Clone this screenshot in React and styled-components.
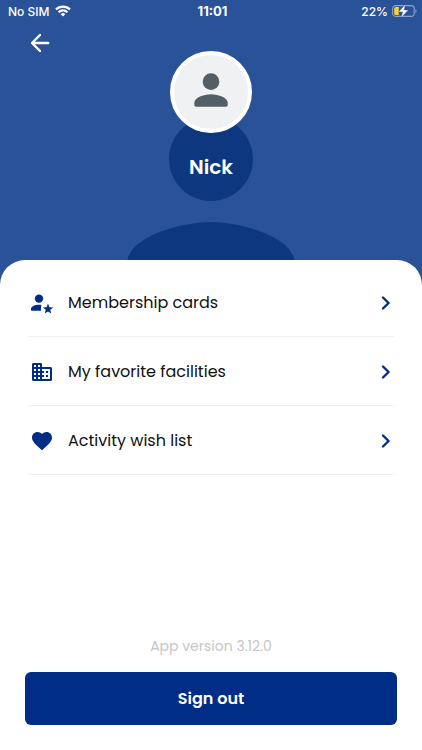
import React from 'react'
import styled, { createGlobalStyle } from 'styled-components'
import { MdPerson, MdFavorite } from 'react-icons/md'

const menuItems = [
  { label: 'Membership cards', icon: <MemberIcon /> },
  { label: 'My favorite facilities', icon: <BuildingIcon /> },
  { label: 'Activity wish list', icon: <MdFavorite size={24} /> },
]

function App() {
  return (
    <>
      <GlobalStyle />
      <Page>
        <Header>
          <Watermark>
            <MdPerson size={252} />
          </Watermark>
          <StatusBar>
            <Carrier>
              No SIM
              <WifiIcon />
            </Carrier>
            <Clock>11:01</Clock>
            <Battery>
              22%
              <BatteryIcon />
            </Battery>
          </StatusBar>
          <BackButton aria-label="Back">
            <svg width="20" height="20" viewBox="0 0 20 20" fill="none" stroke="currentColor" strokeWidth="2.4" strokeLinecap="round" strokeLinejoin="round">
              <path d="M18.2 10H2.2M10 2L2 10l8 8" />
            </svg>
          </BackButton>
          <Profile>
            <Avatar>
              <AvatarIcon />
            </Avatar>
            <Name>Nick</Name>
          </Profile>
        </Header>

        <Sheet>
          <Menu>
            {menuItems.map((item) => (
              <li key={item.label}>
                <MenuButton>
                  {item.icon}
                  <MenuLabel>{item.label}</MenuLabel>
                  <Chevron />
                </MenuButton>
              </li>
            ))}
          </Menu>
          <Footer>
            <Version>App version 3.12.0</Version>
            <SignOut>Sign out</SignOut>
          </Footer>
        </Sheet>
      </Page>
    </>
  )
}

function WifiIcon() {
  return (
    <svg width="16" height="12" viewBox="0 0 16 12" fill="none" stroke="currentColor" strokeWidth="2.2">
      <path d="M1 4.4a10 10 0 0 1 14 0" />
      <path d="M3.6 7.2a6.2 6.2 0 0 1 8.8 0" />
      <path d="M8 11.6L5.7 9.2a3.3 3.3 0 0 1 4.6 0z" fill="currentColor" stroke="none" />
    </svg>
  )
}

function BatteryIcon() {
  return (
    <svg width="25" height="14" viewBox="0 0 25 14">
      <rect x="0.6" y="1.6" width="21.6" height="10.8" rx="3.2" fill="none" stroke="#8ea2cc" strokeWidth="1.1" />
      <path d="M23.4 5.2v3.6c.8-.3 1.2-1 1.2-1.8s-.4-1.5-1.2-1.8z" fill="#8ea2cc" />
      <path d="M3.8 3h3v8h-3a1.6 1.6 0 0 1-1.6-1.6V4.6A1.6 1.6 0 0 1 3.8 3z" fill="#f8d038" />
      <path d="M13.4.2L6.6 8h4L9 13.8 16.400 6h-4.200z" fill="#fff" stroke="#2a5298" strokeWidth=".4" />
    </svg>
  )
}

function AvatarIcon() {
  return (
    <svg width="50" height="50" viewBox="0 0 24 24" fill="#535f66">
      <circle cx="12" cy="8" r="4" />
      <path d="M12 14c-2.67 0-8 1.34-8 4v1.2c0 .5.3.8.8.8h14.4c.5 0 .8-.3.8-.8V18c0-2.66-5.33-4-8-4z" />
    </svg>
  )
}

function MemberIcon() {
  return (
    <svg width="24" height="24" viewBox="0 0 24 24" fill="currentColor">
      <circle cx="9" cy="7.6" r="4.2" />
      <path d="M11.5 13.9C7.5 13.2 1 14.6 1 18v1c0 .5.3.8.8.8h9.4c-.4-2-.4-4 .3-5.9z" />
      <path d="M18 12.6l1.4 3.6 3.9.2-3.1 2.4 1.1 3.8-3.3-2.200-3.300 2.200 1.100-3.800-3.100-2.400 3.900-.2z" />
    </svg>
  )
}

function BuildingIcon() {
  return (
    <svg width="24" height="24" viewBox="0 0 24 24" fill="currentColor">
      <path
        fillRule="evenodd"
        d="M12 7V4.200c0-.7-.5-1.200-1.200-1.200H3.500C2.700 3 2 3.700 2 4.500v15c0 .8.700 1.500 1.500 1.500h17c.8 0 1.500-.7 1.500-1.500v-11c0-.8-.7-1.500-1.500-1.500H12zM6 19H4v-2h2v2zm0-4H4v-2h2v2zm0-4H4V9h2v2zm0-4H4V5h2v2zm4 12H8v-2h2v2zm0-4H8v-2h2v2zm0-4H8V9h2v2zm0-4H8V5h2v2zm10 12h-8v-2h2v-2h-2v-2h2v-2h-2V9h8v10zm-2-8h-2v2h2v-2zm0 4h-2v2h2v-2z"
      />
    </svg>
  )
}

function Chevron() {
  return (
    <svg width="16" height="16" viewBox="0 0 16 16" fill="none" stroke="currentColor" strokeWidth="2.4" strokeLinecap="round" strokeLinejoin="round">
      <path d="M5 2.5l5.600 5.500L5 13.500" />
    </svg>
  )
}

const GlobalStyle = createGlobalStyle`
  * {
    box-sizing: border-box;
  }

  body {
    margin: 0;
    background: #fff;
    font-family: 'Poppins', 'Inter', sans-serif;
  }

  button {
    border: none;
    background: none;
    padding: 0;
    font-family: inherit;
    cursor: pointer;
  }

  svg {
    display: block;
    flex-shrink: 0;
  }
`

const Page = styled.div`
  min-height: 100vh;
  display: flex;
  flex-direction: column;
`

const Header = styled.header`
  position: relative;
  overflow: hidden;
  background: #2a5298;
  color: #fff;
  padding-bottom: 104px;
`

const Watermark = styled.div`
  position: absolute;
  top: 75px;
  left: 0;
  right: 0;
  display: flex;
  justify-content: center;
  color: #0d3880;
`

const StatusBar = styled.div`
  position: relative;
  display: grid;
  grid-template-columns: 1fr auto 1fr;
  align-items: center;
  height: 22px;
  padding: 0 5px 0 8px;
  font-family: 'Inter', sans-serif;
  font-size: 12px;
  font-weight: 500;
`

const Carrier = styled.div`
  display: flex;
  align-items: center;
  gap: 5px;
`

const Clock = styled.div`
  font-size: 13px;
  font-weight: 700;
`

const Battery = styled(Carrier)`
  justify-content: flex-end;
  gap: 4px;
`

const BackButton = styled.button`
  position: absolute;
  top: 29px;
  left: 26px;
  padding: 4px;
  color: #fff;
`

const Profile = styled.div`
  position: relative;
  display: flex;
  flex-direction: column;
  align-items: center;
  gap: 20px;
  padding-top: 29px;
`

const Avatar = styled.div`
  width: 82px;
  height: 82px;
  display: flex;
  align-items: center;
  justify-content: center;
  padding-bottom: 4px;
  border: 4px solid #fff;
  border-radius: 50%;
  background: #f0f1f3;
`

const Name = styled.h1`
  margin: 0;
  font-size: 20px;
  line-height: 28px;
  font-weight: 600;
`

const Sheet = styled.main`
  position: relative;
  flex: 1;
  display: flex;
  flex-direction: column;
  margin-top: -25px;
  padding: 8px 25px 25px;
  border-radius: 25px 25px 0 0;
  background: #fff;
`

const Menu = styled.ul`
  list-style: none;
  margin: 0;
  padding: 0 3px;
`

const MenuButton = styled.button`
  width: 100%;
  height: 69px;
  display: flex;
  align-items: center;
  gap: 14px;
  padding: 2px 0 0 2px;
  border-bottom: 1px solid #f0f0f0;
  color: #002d85;
`

const MenuLabel = styled.span`
  flex: 1;
  text-align: left;
  font-size: 16px;
  line-height: 24px;
  color: #111;
`

const Footer = styled.footer`
  display: flex;
  flex-direction: column;
  gap: 14px;
  margin-top: auto;
`

const Version = styled.p`
  margin: 0;
  text-align: center;
  font-size: 14px;
  line-height: 24px;
  color: #c6c6c6;
`

const SignOut = styled.button`
  height: 53px;
  border-radius: 6px;
  background: #002d85;
  color: #fff;
  font-size: 16px;
  font-weight: 600;
`

export default App
